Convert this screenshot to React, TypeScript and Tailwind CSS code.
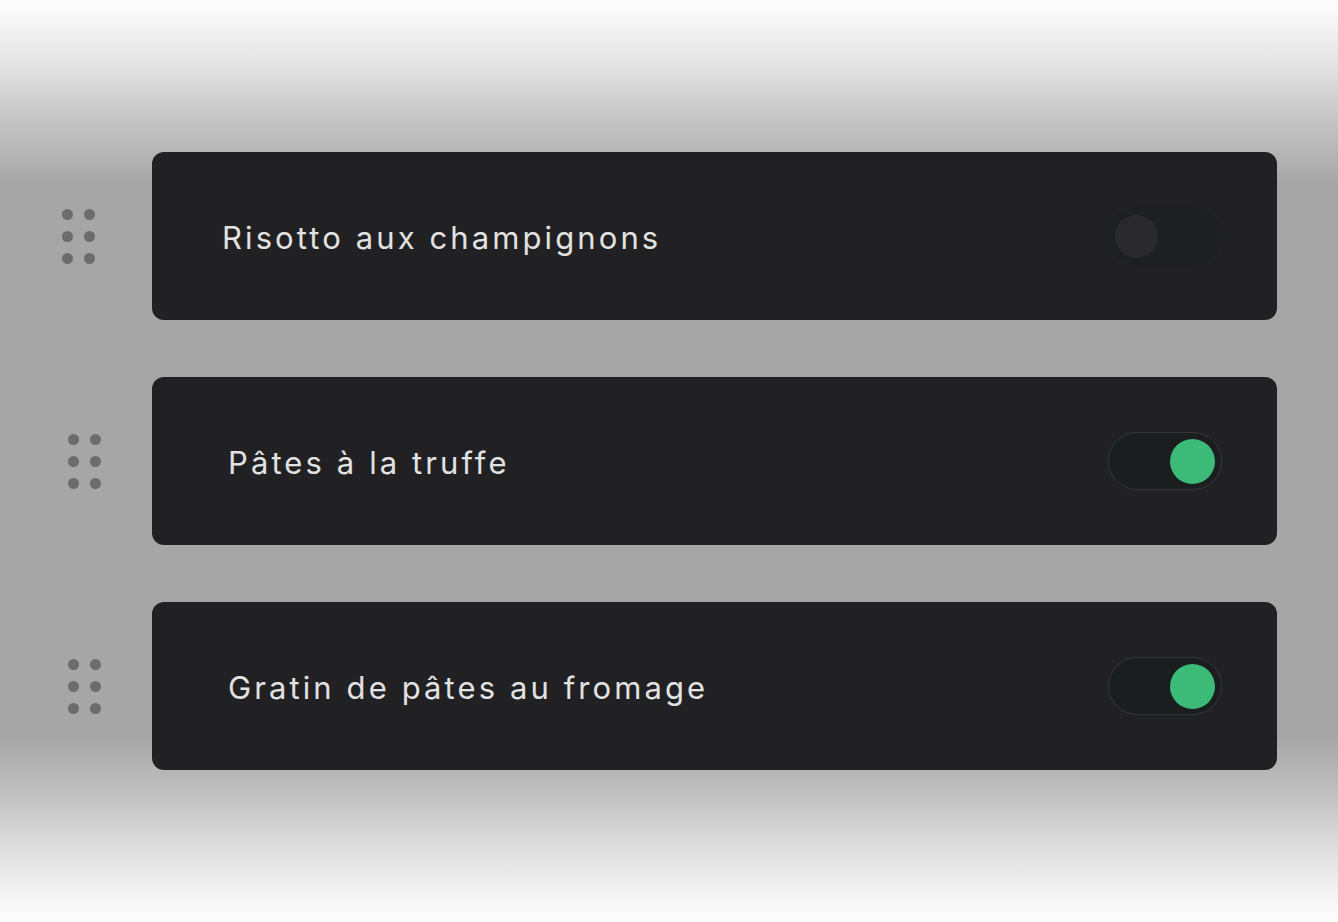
import React from 'react';

type Dish = { name: string; enabled: boolean; shift: boolean };

const dishes: Dish[] = [
  { name: 'Risotto aux champignons', enabled: false, shift: false },
  { name: 'Pâtes à la truffe', enabled: true, shift: true },
  { name: 'Gratin de pâtes au fromage', enabled: true, shift: true },
];

function DragHandle() {
  return (
    <div className="grid grid-cols-2 gap-[11px] w-fit">
      {Array.from({ length: 6 }).map((_, i) => (
        <span key={i} className="block w-[11px] h-[11px] rounded-full bg-[#6c6c6c]" />
      ))}
    </div>
  );
}

function Toggle({ on }: { on: boolean }) {
  return (
    <div
      className={
        on
          ? 'flex items-center justify-end w-[114px] h-[58px] rounded-full bg-[#1b1e1f] border border-[#343637] px-[6px]'
          : 'flex items-center justify-start w-[114px] h-[58px] rounded-full bg-[#1d2021] border border-[#1d2021] px-[6px]'
      }
    >
      <span
        className={
          on
            ? 'block w-[45px] h-[45px] rounded-full bg-[#3bba78]'
            : 'block w-[43px] h-[43px] rounded-full bg-[#2a2a2d]'
        }
      />
    </div>
  );
}

export default function App() {
  return (
    <div className="w-[1338px] h-[922px] bg-[linear-gradient(to_bottom,#fbfbfb_1%,#e3e3e3_7%,#c5c5c5_13%,#a6a6a6_20%,#a6a6a6_80%,#c5c5c5_87%,#e3e3e3_93%,#fbfbfb_99%)] pt-[152px] font-['Inter',sans-serif]">
      <div className="flex flex-col gap-[57px]">
        {dishes.map((d) => (
          <div key={d.name} className="flex items-center">
            <div className={d.shift ? 'w-[152px] pl-[68px]' : 'w-[152px] pl-[62px]'}>
              <DragHandle />
            </div>
            <div
              className={
                d.shift
                  ? 'flex items-center justify-between w-[1125px] h-[168px] rounded-[12px] bg-[#212123] pl-[76px] pr-[55px]'
                  : 'flex items-center justify-between w-[1125px] h-[168px] rounded-[12px] bg-[#212123] pl-[70px] pr-[55px]'
              }
            >
              <span className="text-[31px] tracking-[3.1px] text-[#e2e2e2] leading-none pt-[2px]">{d.name}</span>
              <Toggle on={d.enabled} />
            </div>
          </div>
        ))}
      </div>
    </div>
  );
}
